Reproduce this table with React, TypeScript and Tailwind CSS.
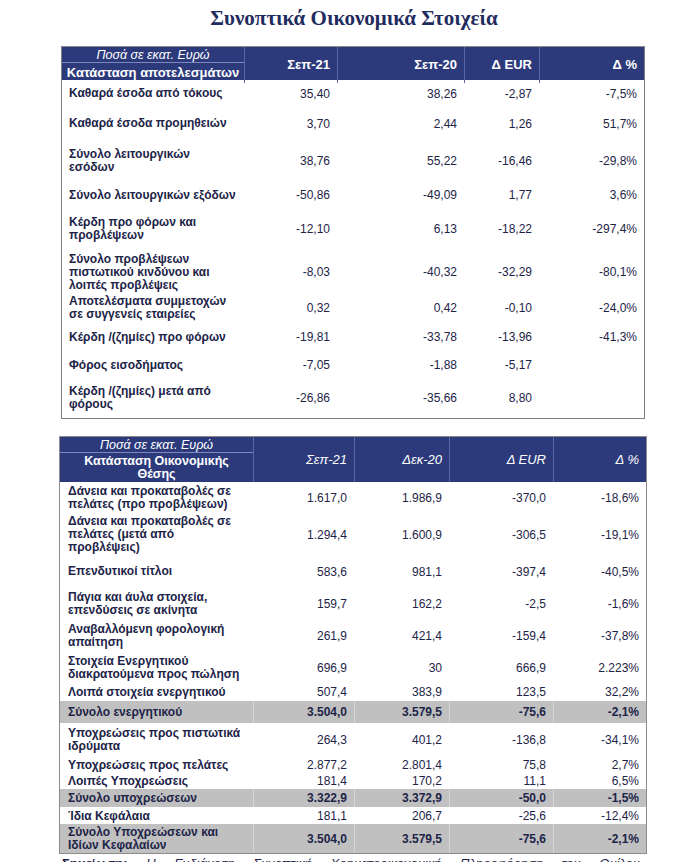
type Row = {
  h: number
  label: string[]
  v: string[]
  gray?: boolean
}

const results: Row[] = [
  { h: 27, label: ['Καθαρά έσοδα από τόκους'], v: ['35,40', '38,26', '-2,87', '-7,5%'] },
  { h: 33, label: ['Καθαρά έσοδα προμηθειών'], v: ['3,70', '2,44', '1,26', '51,7%'] },
  { h: 42, label: ['Σύνολο λειτουργικών', 'εσόδων'], v: ['38,76', '55,22', '-16,46', '-29,8%'] },
  { h: 26, label: ['Σύνολο λειτουργικών εξόδων'], v: ['-50,86', '-49,09', '1,77', '3,6%'] },
  { h: 42, label: ['Κέρδη προ φόρων και', 'προβλέψεων'], v: ['-12,10', '6,13', '-18,22', '-297,4%'] },
  {
    h: 44,
    label: ['Σύνολο προβλέψεων', 'πιστωτικού κινδύνου και', 'λοιπές προβλέψεις'],
    v: ['-8,03', '-40,32', '-32,29', '-80,1%'],
  },
  { h: 28, label: ['Αποτελέσματα συμμετοχών', 'σε συγγενείς εταιρείες'], v: ['0,32', '0,42', '-0,10', '-24,0%'] },
  { h: 30, label: ['Κέρδη /(ζημίες) προ φόρων'], v: ['-19,81', '-33,78', '-13,96', '-41,3%'] },
  { h: 26, label: ['Φόρος εισοδήματος'], v: ['-7,05', '-1,88', '-5,17', ''] },
  { h: 40, label: ['Κέρδη /(ζημίες) μετά από', 'φόρους'], v: ['-26,86', '-35,66', '8,80', ''] },
]

const balance: Row[] = [
  { h: 32, label: ['Δάνεια και προκαταβολές σε', 'πελάτες (προ προβλέψεων)'], v: ['1.617,0', '1.986,9', '-370,0', '-18,6%'] },
  {
    h: 41,
    label: ['Δάνεια και προκαταβολές σε', 'πελάτες (μετά από', 'προβλέψεις)'],
    v: ['1.294,4', '1.600,9', '-306,5', '-19,1%'],
  },
  { h: 33, label: ['Επενδυτικοί τίτλοι'], v: ['583,6', '981,1', '-397,4', '-40,5%'] },
  { h: 32, label: ['Πάγια και άυλα στοιχεία,', 'επενδύσεις σε ακίνητα'], v: ['159,7', '162,2', '-2,5', '-1,6%'] },
  { h: 32, label: ['Αναβαλλόμενη φορολογική', 'απαίτηση'], v: ['261,9', '421,4', '-159,4', '-37,8%'] },
  { h: 31, label: ['Στοιχεία Ενεργητικού', 'διακρατούμενα προς πώληση'], v: ['696,9', '30', '666,9', '2.223%'] },
  { h: 18, label: ['Λοιπά στοιχεία ενεργητικού'], v: ['507,4', '383,9', '123,5', '32,2%'] },
  { h: 22, gray: true, label: ['Σύνολο ενεργητικού'], v: ['3.504,0', '3.579,5', '-75,6', '-2,1%'] },
  { h: 33, label: ['Υποχρεώσεις προς πιστωτικά', 'ιδρύματα'], v: ['264,3', '401,2', '-136,8', '-34,1%'] },
  { h: 16, label: ['Υποχρεώσεις προς πελάτες'], v: ['2.877,2', '2.801,4', '75,8', '2,7%'] },
  { h: 17, label: ['Λοιπές Υποχρεώσεις'], v: ['181,4', '170,2', '11,1', '6,5%'] },
  { h: 18, gray: true, label: ['Σύνολο υποχρεώσεων'], v: ['3.322,9', '3.372,9', '-50,0', '-1,5%'] },
  { h: 17, label: ['Ίδια Κεφάλαια'], v: ['181,1', '206,7', '-25,6', '-12,4%'] },
  {
    h: 29,
    gray: true,
    label: ['Σύνολο Υποχρεώσεων και', 'Ιδίων Κεφαλαίων'],
    v: ['3.504,0', '3.579,5', '-75,6', '-2,1%'],
  },
]

function Label({ lines }: { lines: string[] }) {
  return (
    <div className="whitespace-nowrap font-bold leading-[13px]">
      {lines.map((l) => (
        <div key={l}>{l}</div>
      ))}
    </div>
  )
}

export default function App() {
  return (
    <div
      className="w-[690px] bg-white text-[12px] text-[#1d2448]"
      style={{ fontFamily: '"Liberation Sans", Arial, sans-serif' }}
    >
      {/* Title */}
      <h1
        className="pt-[6px] pl-[18px] text-center text-[21px] font-bold leading-[24px] text-[#1f2c5e]"
        style={{ fontFamily: '"Liberation Serif", "Times New Roman", serif' }}
      >
        Συνοπτικά Οικονομικά Στοιχεία
      </h1>

      {/* Results table */}
      <div className="ml-[61px] mt-[16px] w-[584px] border-x border-b border-[#7f7f7f]">
        <div className="grid h-[34px] grid-cols-[182px_93px_127px_75px_105px] border-t border-[#8a8a8a] bg-[#2c3a7c] text-white">
          <div className="flex flex-col">
            <div className="h-[16px] border-b border-[#7d88bd] text-center text-[12.5px] italic leading-[16px]">
              Ποσά σε εκατ. Ευρώ
            </div>
            <div className="flex flex-1 items-center justify-center text-[13px] font-bold">
              Κατάσταση αποτελεσμάτων
            </div>
          </div>
          {['Σεπ-21', 'Σεπ-20', 'Δ EUR', 'Δ %'].map((h) => (
            <div key={h} className="flex items-center justify-end border-l border-[#5a67a3] pr-[7px] text-[13px] font-bold">
              {h}
            </div>
          ))}
        </div>
        {results.map((r) => (
          <div
            key={r.label[0]}
            className="grid grid-cols-[182px_93px_127px_75px_105px]"
            style={{ height: r.h }}
          >
            <div className="flex items-center pl-[7px]">
              <Label lines={r.label} />
            </div>
            {r.v.map((v, i) => (
              <div key={i} className="flex items-center justify-end pr-[7px]">
                {v}
              </div>
            ))}
          </div>
        ))}
      </div>

      {/* Balance sheet table */}
      <div className="ml-[59px] mt-[17px] w-[588px] border-x border-b border-[#8c8c8c]">
        <div className="grid h-[46px] grid-cols-[193px_101px_95px_104px_93px] border-t border-[#8a8a8a] bg-[#2c3a7c] text-white">
          <div className="flex flex-col">
            <div className="h-[16px] border-b border-[#7d88bd] text-center text-[12.5px] italic leading-[16px]">
              Ποσά σε εκατ. Ευρώ
            </div>
            <div className="flex flex-1 flex-col items-center justify-center pt-[1px] text-[12.5px] font-bold leading-[13px]">
              <div>Κατάσταση Οικονομικής</div>
              <div>Θέσης</div>
            </div>
          </div>
          {['Σεπ-21', 'Δεκ-20', 'Δ EUR', 'Δ %'].map((h) => (
            <div key={h} className="flex items-center justify-end border-l border-[#5a67a3] pr-[7px] text-[13px] italic">
              {h}
            </div>
          ))}
        </div>
        {balance.map((r) => (
          <div
            key={r.label[0] + r.v[0]}
            className={
              r.gray
                ? 'grid grid-cols-[193px_101px_95px_104px_93px] bg-[#c0c0c0] font-bold'
                : 'grid grid-cols-[193px_101px_95px_104px_93px]'
            }
            style={{ height: r.h }}
          >
            <div className="flex items-center pl-[8px]">
              <Label lines={r.label} />
            </div>
            {r.v.map((v, i) => (
              <div
                key={i}
                className={
                  r.gray
                    ? 'flex items-center justify-end border-l border-[#d6d6d6] pr-[7px]'
                    : 'flex items-center justify-end pr-[7px]'
                }
              >
                {v}
              </div>
            ))}
          </div>
        ))}
      </div>

      {/* Footnote */}
      <p className="ml-[62px] mt-[2px] w-[578px] text-justify text-[13px] italic leading-[16px] [text-align-last:justify]">
        <span className="font-bold not-italic underline">Σημείωση:</span> Η Ενδιάμεση Συνοπτική Χρηματοοικονομική
        Πληροφόρηση του Ομίλου
      </p>
    </div>
  )
}
